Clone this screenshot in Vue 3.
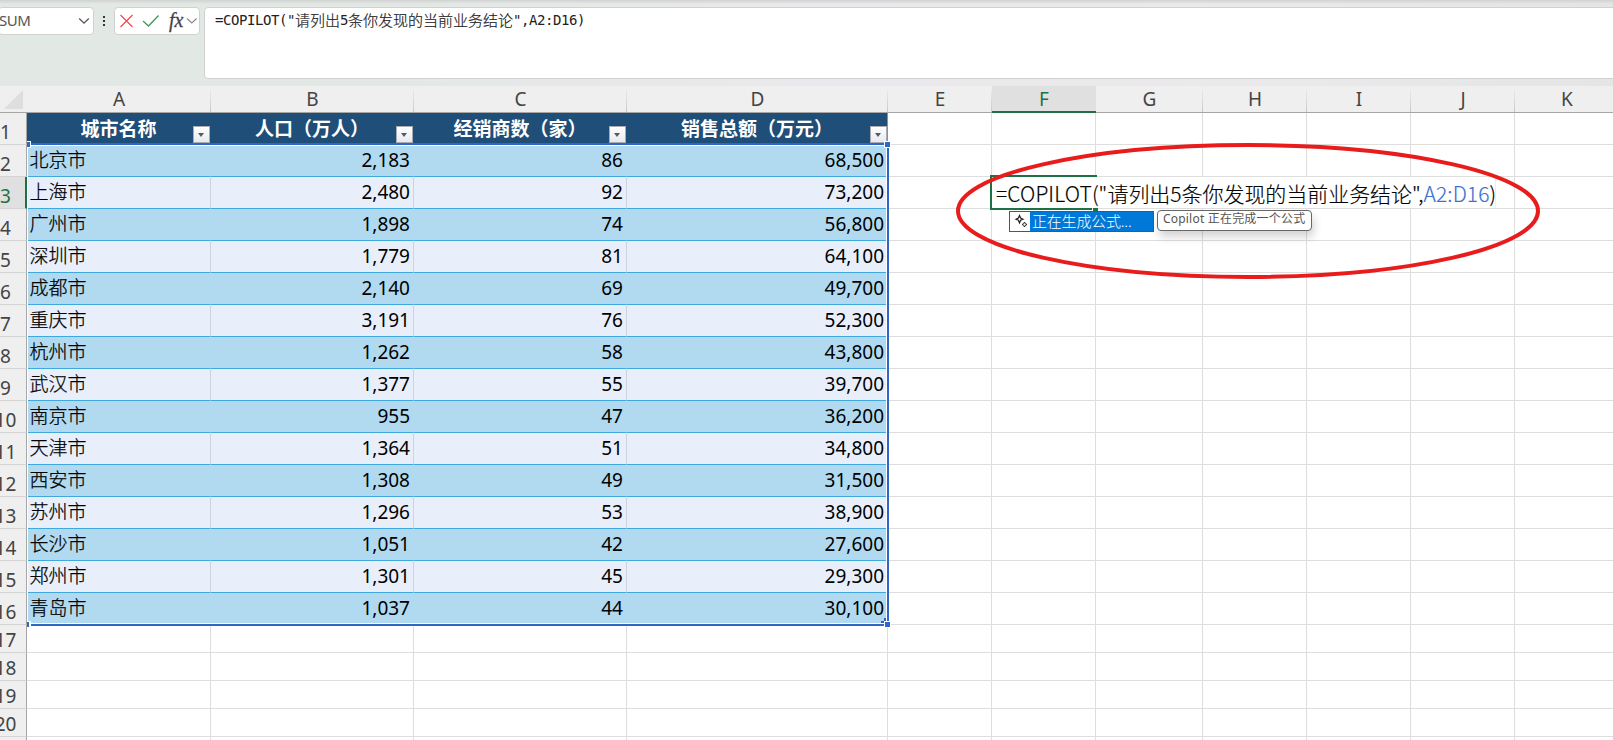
<script setup>
const columns = [
  { name: 'A' }, { name: 'B' }, { name: 'C' }, { name: 'D' }, { name: 'E' },
  { name: 'F', active: true }, { name: 'G' }, { name: 'H' }, { name: 'I' }, { name: 'J' }, { name: 'K' },
]
const headers = ['城市名称', '人口（万人）', '经销商数（家）', '销售总额（万元）']
const records = [
  ['北京市', '2,183', '86', '68,500'],
  ['上海市', '2,480', '92', '73,200'],
  ['广州市', '1,898', '74', '56,800'],
  ['深圳市', '1,779', '81', '64,100'],
  ['成都市', '2,140', '69', '49,700'],
  ['重庆市', '3,191', '76', '52,300'],
  ['杭州市', '1,262', '58', '43,800'],
  ['武汉市', '1,377', '55', '39,700'],
  ['南京市', '955', '47', '36,200'],
  ['天津市', '1,364', '51', '34,800'],
  ['西安市', '1,308', '49', '31,500'],
  ['苏州市', '1,296', '53', '38,900'],
  ['长沙市', '1,051', '42', '27,600'],
  ['郑州市', '1,301', '45', '29,300'],
  ['青岛市', '1,037', '44', '30,100'],
]
const emptyRows = [17, 18, 19, 20]
</script>

<template>
  <div class="app">
    <div class="bar">
      <div class="namebox">
        <span>SUM</span>
        <svg width="12" height="8" viewBox="0 0 12 8"><path d="M1.200 1.500 6 6.200l4.800-4.700" fill="none" stroke="#555" stroke-width="1.300" /></svg>
      </div>
      <div class="dots"><i></i><i></i><i></i></div>
      <div class="fxbox">
        <svg width="84" height="26" viewBox="0 0 84 26">
          <path d="M5.500 7l12 12M17.500 7l-12 12" fill="none" stroke="#f04a4a" stroke-width="1.200" />
          <path d="M28 13l5.500 5L43.500 7.500" fill="none" stroke="#3f9b57" stroke-width="1.300" />
          <path d="M72 10.500l4.800 4.500 4.800-4.500" fill="none" stroke="#888" stroke-width="1.100" />
        </svg>
        <span class="fx">fx</span>
      </div>
      <div class="formula">
        <span>=COPILOT("</span><span class="han">请列出</span><span>5</span><span class="han">条你发现的当前业务结论</span><span>",A2:D16)</span>
      </div>
    </div>

    <div class="sheet">
      <div class="row colhead">
        <div class="corner"><svg width="19" height="19" viewBox="0 0 19 19"><path d="M19 0v19H0z" fill="#dedede" /></svg></div>
        <div v-for="c in columns" :key="c.name" class="col" :class="{ active: c.active }">{{ c.name }}</div>
      </div>
      <div class="row tall">
        <div class="num">1</div>
        <div v-for="h in headers" :key="h" class="cell th">{{ h }}<span class="filter"></span></div>
        <div v-for="n in 7" :key="n" class="cell"></div>
      </div>
      <div v-for="(r, i) in records" :key="r[0]" class="row tall" :class="i % 2 ? 'even' : 'odd'">
        <div class="num" :class="{ active: i === 1 }">{{ i + 2 }}</div>
        <div v-for="(v, j) in r" :key="j" class="cell td" :class="{ city: j === 0 }">{{ v }}</div>
        <div v-for="n in 7" :key="n" class="cell"></div>
      </div>
      <div v-for="n in emptyRows" :key="n" class="row short">
        <div class="num">{{ n }}</div>
        <div v-for="c in columns" :key="c.name" class="cell"></div>
      </div>
      <div class="row short">
        <div class="num"></div>
        <div v-for="c in columns" :key="c.name" class="cell"></div>
      </div>
    </div>

    <!-- referenced range outline and its handles -->
    <svg class="overlay" width="1613" height="740" viewBox="0 0 1613 740">
      <g shape-rendering="crispEdges">
        <path d="M27 145h860v1H28v477h858V146h1v478H27z" fill="#fff" />
        <path d="M887 113h1v30h-1z" fill="#3fa9dd" />
        <path d="M30 143h857v2H30zM887 145h2v479h-2zM30 624h857v2H30z" fill="#2f67c6" />
        <path d="M27 141h4v7h-4zM27 621h4v7h-4zM884 141h7v7h-7zM884 621h7v7h-7z" fill="#fff" />
        <path d="M27 142h3v5h-3zM27 622h2v5h-2zM885 142h5v5h-5zM885 622h5v5h-5z" fill="#2f67c6" />
        <path d="M884 618h2v3h-2zM881 621h3v2h-3z" fill="#4355ae" />
      </g>
    </svg>

    <div class="editor">
      <span class="lead">=COPILOT("</span><span class="zh">请列出</span><span>5</span><span class="zh">条你发现的当前业务结论</span><span>",</span><span class="ref">A2:D16</span><span>)</span>
    </div>
    <svg class="overlay" width="1613" height="740" viewBox="0 0 1613 740">
      <path d="M990 175h107v2H992v31h100v2H990zM1093 208h5v3h-5z" fill="#1e7145" shape-rendering="crispEdges" />
    </svg>

    <div class="suggest">
      <div class="spark">
        <svg width="20" height="19" viewBox="0 0 20 19">
          <path d="M9.500 3.500 10.600 6.100 13 7.200 10.600 8.300 9.500 10.900 8.400 8.300 6 7.200 8.400 6.100z" fill="none" stroke="#222" stroke-width="1.200" />
          <path d="M14.500 10l.8 1.700 1.700.8-1.700.8-.8 1.700-.8-1.700-1.700-.8 1.700-.8z" fill="none" stroke="#222" stroke-width="1" />
        </svg>
      </div>
      <div class="hit">正在生成公式...</div>
    </div>
    <div class="tip">Copilot 正在完成一个公式</div>

    <svg class="overlay" width="1613" height="740" viewBox="0 0 1613 740">
      <ellipse cx="1248" cy="211" rx="290" ry="66" fill="none" stroke="#e81c1c" stroke-width="4" />
    </svg>
  </div>
</template>

<style>
body { margin: 0; overflow: hidden; }
</style>

<style scoped>
.app {
  position: relative;
  width: 1613px;
  height: 740px;
  overflow: hidden;
  background: #fff;
  font-family: "Noto Sans", "Noto Sans CJK SC", sans-serif;
}
.bar {
  box-sizing: border-box;
  height: 86px;
  padding-top: 7px;
  display: flex;
  align-items: flex-start;
  background:
    linear-gradient(#d0d3d1, rgba(220, 220, 220, 0) 4px),
    linear-gradient(90deg, #e2e8e4 0, #e3e8e5 400px, #ebe8ed 850px, #ebe9ec 1200px, #e5e5e5 100%);
}
.namebox, .fxbox, .formula {
  box-sizing: border-box;
  flex: none;
  background: #fff;
  border: 1px solid #d0d2d1;
  border-radius: 4px;
}
.namebox {
  width: 96px;
  height: 28px;
  margin-left: -2px;
  padding-right: 3px;
  display: flex;
  align-items: center;
  justify-content: space-between;
  font-size: 15px;
  line-height: 24px;
  color: #555;
}
.namebox span { margin-top: -2px; letter-spacing: -0.5px; }
.dots {
  flex: none;
  width: 20px;
  height: 28px;
  display: flex;
  flex-direction: column;
  align-items: center;
  justify-content: center;
  gap: 2px;
}
.dots i { width: 2px; height: 2px; background: #333; }
.fxbox { position: relative; width: 86px; height: 28px; }
.fx {
  position: absolute;
  left: 54px;
  top: 0;
  font: italic 20px/24px "Liberation Serif", serif;
  -webkit-text-stroke: 0.3px #444;
  color: #444;
}
.formula {
  width: 1420px;
  height: 72px;
  margin-left: 4px;
  padding: 1px 0 0 10px;
  display: flex;
  font: 14px/22px "DejaVu Sans Mono", monospace;
  letter-spacing: -0.43px;
  color: #222;
  white-space: pre;
}
.formula .han { font: 300 15px/22px "Noto Sans CJK SC", sans-serif; letter-spacing: 0; -webkit-text-stroke: 0.2px #222; }

.row {
  display: grid;
  width: 1619px;
  grid-template-columns: 27px 184px 203px 213px 261px 104px 104px 107px 104px 104px 104px 104px;
  grid-template-rows: 100%;
}
.colhead { height: 27px; background: #efefef; }
.corner {
  box-sizing: border-box;
  border-bottom: 1px solid #a6a6a6;
  padding: 4px 0 0 4px;
  line-height: 0;
}
.col {
  box-sizing: border-box;
  border-bottom: 1px solid #a6a6a6;
  background: linear-gradient(#efefef, #c8c8c8) right / 1px 100% no-repeat;
  text-align: center;
  font-size: 19px;
  line-height: 26px;
  color: #444;
}
.col.active {
  background: #e0e0e0;
  border-bottom: 2px solid #1e7145;
  color: #1e7145;
}
.tall { height: 32px; }
.short { height: 28px; }
.num {
  box-sizing: border-box;
  border-right: 1px solid #a6a6a6;
  border-bottom: 1px solid #d4d4d4;
  background: #efefef;
  display: flex;
  align-items: flex-end;
  justify-content: center;
  padding-right: 15px;
  font-size: 19px;
  line-height: 23px;
  color: #444;
}
.num.active { background: #e0e0e0; color: #1e7145; border-right: 2px solid #1e7145; padding-right: 14px; }
.cell {
  box-sizing: border-box;
  border-right: 1px solid #dedede;
  border-bottom: 1px solid #dedede;
  font-size: 19px;
  line-height: 31px;
  color: #000;
  white-space: nowrap;
}
.th {
  position: relative;
  background: #1f4e78;
  border-color: #1f4e78;
  color: #fff;
  font-family: "Noto Sans CJK SC", sans-serif;
  font-weight: bold;
  line-height: 30px;
  text-align: center;
}
.filter {
  position: absolute;
  right: 0;
  bottom: 1px;
  box-sizing: border-box;
  width: 17px;
  height: 17px;
  border: 1px solid #a8abb3;
  background: linear-gradient(#fff, #e6e9f0);
}
.filter::after {
  content: "";
  position: absolute;
  left: 4px;
  top: 6px;
  border: 3.5px solid transparent;
  border-top: 4px solid #5a5a5a;
  border-bottom: 0;
}
.td { text-align: right; padding-right: 3px; border-bottom-color: #3fa9dd; }
.odd .td { background: #b1d9f0; border-right-color: #b1d9f0; }
.even .td { background: #e9effa; border-right-color: #cdd3df; }
.td.city {
  text-align: left;
  padding-left: 2.5px;
  font-family: "Noto Sans CJK SC", sans-serif;
  font-weight: 300;
  line-height: 28px;
  -webkit-text-stroke: 0.25px #000;
}

.overlay { position: absolute; left: 0; top: 0; }
.editor {
  position: absolute;
  left: 992px;
  top: 177px;
  box-sizing: border-box;
  width: 504px;
  height: 31px;
  padding-left: 4px;
  display: flex;
  background: #fff;
  border-right: 1px solid #eee;
  font: 300 21px/33px "Noto Sans CJK SC", sans-serif;
  -webkit-text-stroke: 0.15px currentColor;
  color: #000;
  white-space: pre;
}
.lead { letter-spacing: 0.1px; }
.zh { letter-spacing: -0.05px; }
.ref { color: #3b6fd0; letter-spacing: 0.1px; }
.suggest {
  position: absolute;
  left: 1009px;
  top: 211px;
  box-sizing: border-box;
  width: 145px;
  height: 21px;
  display: flex;
  background: #fff;
  border: 1px solid #555;
}
.spark { width: 20px; height: 19px; line-height: 0; }
.hit {
  flex: 1;
  padding-left: 2px;
  background: #0078d7;
  color: #fff;
  font: 300 15px/18px "Noto Sans CJK SC", sans-serif;
  letter-spacing: -0.2px;
}
.tip {
  position: absolute;
  left: 1157px;
  top: 210px;
  box-sizing: border-box;
  width: 155px;
  height: 21px;
  padding-left: 5px;
  border: 1px solid #666;
  border-radius: 4px;
  background: #fff;
  box-shadow: 2px 6px 9px rgba(0, 0, 0, 0.17);
  font-size: 12px;
  line-height: 16px;
  letter-spacing: 0.2px;
  color: #555;
  white-space: nowrap;
}
</style>
